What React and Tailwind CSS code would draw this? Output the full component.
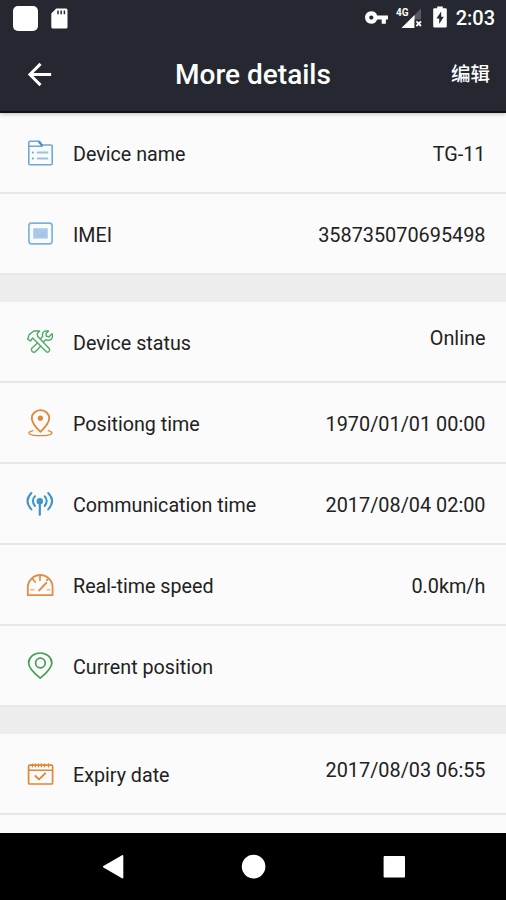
import React from "react";
import { MdArrowBack, MdVpnKey } from "react-icons/md";

function RowIcon({ color, children }) {
  return (
    <svg
      className={`w-7 h-[29px] shrink-0 ${color}`}
      viewBox="0 0 28 29"
      fill="none"
      stroke="currentColor"
      strokeWidth="1.4"
      strokeLinecap="round"
      strokeLinejoin="round"
    >
      {children}
    </svg>
  );
}

const FolderIcon = () => (
  <RowIcon color="text-[#6fa8d6]">
    <path d="M2.8 25.8V4.4Q2.8 3.2 4 3.2H13.2L16 7H25Q26.2 7 26.2 8.2V25.6Q26.2 26.8 25 26.8H3.8Q2.8 26.8 2.8 25.8Z" strokeWidth="1.6" />
    <path d="M3.4 8.2H16" strokeWidth="1.4" />
    <path d="M13.2 4L16 7.4" stroke="#4a90cc" strokeWidth="2.2" />
    <path d="M6.8 14.6H7M6.8 20.4H7" strokeWidth="2" />
    <path d="M11.6 14.6H21.4M11.6 20.4H21.4" strokeWidth="2" opacity="0.7" />
  </RowIcon>
);

const ImeiIcon = () => (
  <RowIcon color="text-[#7fb2dc]">
    <rect x="2.9" y="4.2" width="23.2" height="20.6" rx="2.6" strokeWidth="1.7" />
    <rect x="7.2" y="9.2" width="14.6" height="10.4" fill="#a9cae8" stroke="none" />
    <path d="M10.5 12.5L12 15.5M15 12L17 15.5L19.5 12.5M12 17H20" stroke="#95bee2" strokeWidth="0.8" />
  </RowIcon>
);

const ToolsIcon = () => (
  <RowIcon color="text-[#52a869]">
    <g strokeWidth="1.4">
      <path d="M1.7 12.2L3.2 7.6L7.8 4H13.6L11.2 6.6L11.6 9.2L23.6 22.1Q24 23.4 22.8 24.6Q21.4 25.6 20.3 24.7L8 12.2L6.6 11L4.5 14Z" />
      <path d="M14.8 11.4L16.6 9.5Q15.6 4.6 19.8 3.9L22.6 4L20 6.6L20.4 9.2L23.2 9.7L26 6.6Q28 12.4 22.4 13.4L19.6 12.8L17.9 14.5M11.2 16.2L5.8 21.2Q4.8 23 6.2 24.4Q7.8 25.9 9.5 24.6L14.7 19.3" />
    </g>
  </RowIcon>
);

const PinBaseIcon = () => (
  <RowIcon color="text-[#df8736]">
    <path d="M14.4 23.8Q5.8 15.4 5.8 10.2A8.7 8.1 0 0 1 23.2 10.2Q23.2 15.4 14.4 23.8Z" strokeWidth="1.8" />
    <circle cx="14.4" cy="10.2" r="2.6" fill="currentColor" stroke="none" />
    <path d="M6.8 22.6C-0.8 24.7 3.4 27.7 14.5 27.7S29.6 24.7 22.2 22.6" strokeWidth="1.3" />
  </RowIcon>
);

const AntennaIcon = () => (
  <RowIcon color="text-[#3f94c9]">
    <circle cx="13.8" cy="12.3" r="3.2" fill="currentColor" stroke="none" />
    <path d="M13.8 13V25.8" strokeWidth="2.2" />
    <path d="M9 7.2Q4.8 12 9 17M18.6 7.2Q22.8 12 18.6 17" strokeWidth="2" />
    <path d="M5.4 4Q-2.4 12 5.4 20.4M22.2 4Q30 12 22.2 20.4" strokeWidth="2" />
  </RowIcon>
);

const SpeedIcon = () => (
  <RowIcon color="text-[#df8e47]">
    <path d="M1.8 25.2H26.6V17.5Q26.6 12 22.8 8.5Q19.2 5 14.4 5Q9.4 5 5.8 8.5Q1.8 12 1.8 17.5Z" strokeWidth="1.8" />
    <path d="M13.2 20.4L20.2 13" strokeWidth="2" />
    <path d="M14 5.6V10.2M6.6 8.8L9.2 12M22.2 8.8L20.8 10.4" strokeWidth="1.7" />
    <path d="M4.6 19.7H8M21.4 19.7H24" strokeWidth="1.5" opacity="0.6" />
  </RowIcon>
);

const PositionIcon = () => (
  <RowIcon color="text-[#43a052]">
    <path d="M14.2 27.2Q2.6 17.8 2.6 12A11.6 10 0 0 1 25.8 12Q25.8 17.8 14.2 27.2Z" strokeWidth="1.7" />
    <circle cx="14.4" cy="12" r="4.8" strokeWidth="1.7" />
  </RowIcon>
);

const CalendarIcon = () => (
  <RowIcon color="text-[#df8736]">
    <rect x="2.6" y="6.2" width="24" height="18.8" rx="1" strokeWidth="1.7" />
    <path d="M3.2 11.2H26" strokeWidth="1.6" />
    <path d="M6.4 4.8V8M9.4 4.8V8M12.4 4.8V8M15.4 4.8V8M18.4 4.8V8M22.6 4.8V8" strokeWidth="1.2" />
    <path d="M9.4 17L13 20.4L19.2 14.4" strokeWidth="1.9" />
  </RowIcon>
);

// Each inner list is one block, blocks are split by a gray band
const sections = [
  [
    { icon: FolderIcon, label: "Device name", value: "TG-11" },
    { icon: ImeiIcon, label: "IMEI", value: "358735070695498" },
  ],
  [
    { icon: ToolsIcon, label: "Device status", value: "Online", raised: true },
    { icon: PinBaseIcon, label: "Positiong time", value: "1970/01/01 00:00" },
    { icon: AntennaIcon, label: "Communication time", value: "2017/08/04 02:00" },
    { icon: SpeedIcon, label: "Real-time speed", value: "0.0km/h" },
    { icon: PositionIcon, label: "Current position", value: "" },
  ],
  [{ icon: CalendarIcon, label: "Expiry date", value: "2017/08/03 06:55", raised: true }],
];

function StatusBar() {
  return (
    <div className="h-9 flex items-center justify-between pl-[13px] pr-[11px]">
      <div className="flex items-center gap-3">
        <div className="w-[25px] h-[25px] rounded-[5px] bg-white" />
        <svg className="w-[18px] h-[21px]" viewBox="0 0 18 21">
          <path d="M6.2 0.5H16Q17.5 0.5 17.5 2V19Q17.5 20.5 16 20.5H2.8Q1.3 20.5 1.3 19V5.6Z" fill="#fff" />
          <path d="M8 2.6V6.2M11.2 2.6V6.2M14.4 2.6V6.2" stroke="#252830" strokeWidth="1.5" />
        </svg>
      </div>
      <div className="flex items-center">
        <MdVpnKey className="w-[25px] h-[25px] text-white mr-[7px] -mt-0.5" />
        <svg className="w-[26px] h-6 mr-[11px]" viewBox="0 0 26 24">
          <path d="M25 2.5V22H5.5Z" fill="#565960" />
          <path d="M18.6 9V22H5.5Z" fill="#fff" />
          <path d="M18.6 13.5H26V24H18.6Z" fill="#252830" />
          <path d="M20.4 15.4L25 20M25 15.4L20.4 20" stroke="#fff" strokeWidth="1.8" />
          <text x="0" y="10" fill="#fff" fontFamily="Roboto" fontWeight="700" fontSize="10">4G</text>
        </svg>
        <svg className="w-3.5 h-[22px] mr-[9px] -mt-0.5" viewBox="0 0 14 22">
          <path d="M4.2 0.4H9.8V2.2H12.6Q13.8 2.2 13.8 3.4V20.2Q13.8 21.4 12.6 21.4H1.4Q0.2 21.4 0.2 20.2V3.4Q0.2 2.2 1.4 2.2H4.2Z" fill="#fff" />
          <path d="M8.2 5.6L3.4 12.6H6.2V18L10.8 10.8H8.2Z" fill="#252830" />
        </svg>
        <span className="text-[20px] leading-6 font-medium text-white">2:03</span>
      </div>
    </div>
  );
}

function DetailRow({ icon: Icon, label, value, raised }) {
  return (
    <div className="h-[81px] shrink-0 flex items-center pl-[26px] pr-[20.5px] border-b-2 border-[#e7e7e7]">
      <Icon />
      <span className="ml-[19px] pt-1 flex-1 text-[19.7px]">{label}</span>
      <span className={raised ? "pb-1.5" : "pt-1"}>{value}</span>
    </div>
  );
}

function App() {
  return (
    <div className="w-[506px] h-[900px] overflow-hidden flex flex-col bg-[#fbfbfb] font-['Roboto','Noto_Sans_CJK_SC',sans-serif] text-[19.85px] leading-6 text-[#222222]">
      <header className="h-[113px] shrink-0 bg-[#252830] border-b-2 border-[#111216] shadow-[0_1px_4px_rgba(0,0,0,0.25)] relative">
        <StatusBar />
        <div className="h-[78px] grid grid-cols-[80px_1fr_80px] items-center text-white">
          <MdArrowBack className="ml-[22px] w-[35px] h-[35px] -mt-0.5" />
          <h1 className="text-center text-[28px] leading-8 font-medium">More details</h1>
          <span className="pr-4 text-right text-[19.5px] font-medium">编辑</span>
        </div>
      </header>

      <main className="flex-1 min-h-0 overflow-hidden flex flex-col">
        {sections.map((rows, i) => (
          <React.Fragment key={i}>
            {i > 0 && <div className="h-[27px] shrink-0 bg-[#ededed]" />}
            {rows.map((row) => (
              <DetailRow key={row.label} {...row} />
            ))}
          </React.Fragment>
        ))}
      </main>

      {/* Android navigation bar */}
      <nav className="h-[67px] shrink-0 bg-black">
        <svg className="w-full h-full" viewBox="0 0 506 67" fill="#fff">
          <path d="M103.4 33Q102.4 33.7 103.4 34.4L122 45.2Q123.3 45.8 123.3 44.4V23Q123.3 21.6 122 22.2Z" />
          <circle cx="253.6" cy="33.6" r="11.8" />
          <rect x="383.6" y="22.9" width="21.4" height="21.6" rx="1" />
        </svg>
      </nav>
    </div>
  );
}

export default App;
